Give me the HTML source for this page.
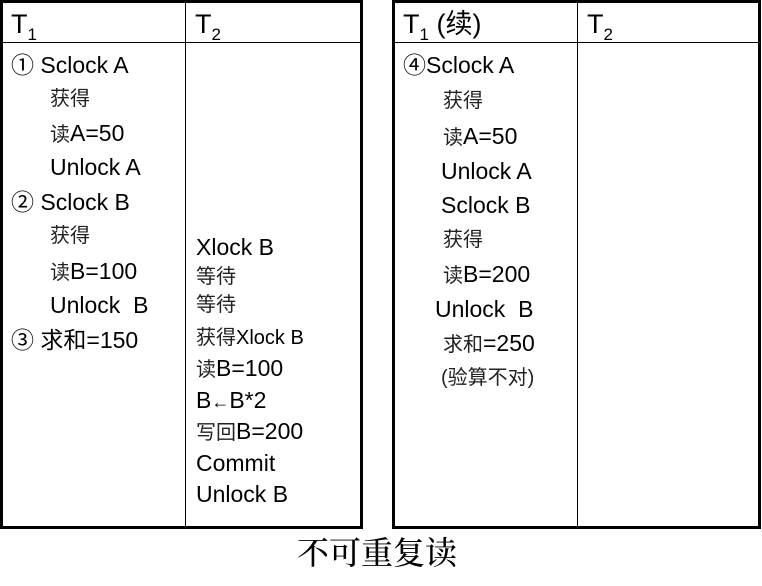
<!DOCTYPE html>
<html><head><meta charset="utf-8"><style>
body{margin:0;width:762px;height:586px;background:#fff;position:relative;overflow:hidden;font-family:"Liberation Sans","Noto Sans CJK SC",sans-serif;color:#000}
.b{position:absolute;border:3px solid #000;box-sizing:border-box}
.l{position:absolute;background:#000}
.t{position:absolute;font-size:23px;line-height:26px;white-space:pre}
.c{font-size:20px;color:#222}
sub{font-size:17px;vertical-align:-7px}
</style></head><body>
<div class="b" style="left:0;top:0;width:363px;height:529px"></div>
<div class="l" style="left:185px;top:0;width:1px;height:529px"></div>
<div class="l" style="left:0;top:42px;width:363px;height:1px"></div>
<div class="b" style="left:392px;top:0;width:369px;height:529px"></div>
<div class="l" style="left:577px;top:0;width:1px;height:529px"></div>
<div class="l" style="left:392px;top:42px;width:369px;height:1px"></div>

<div class="t" style="left:11px;top:9px;font-size:27px;line-height:30px">T<sub>1</sub></div>
<div class="t" style="left:195px;top:9px;font-size:27px;line-height:30px">T<sub>2</sub></div>
<div class="t" style="left:403px;top:9px;font-size:27px;line-height:30px">T<sub>1</sub> (续)</div>
<div class="t" style="left:587px;top:9px;font-size:27px;line-height:30px">T<sub>2</sub></div>

<div class="t" style="left:11px;top:52px">① Sclock A</div>
<div class="t c" style="left:50px;top:86px">获得</div>
<div class="t" style="left:50px;top:120px"><span class="c">读</span>A=50</div>
<div class="t" style="left:50px;top:154px">Unlock A</div>
<div class="t" style="left:11px;top:189px">② Sclock B</div>
<div class="t c" style="left:50px;top:223px">获得</div>
<div class="t" style="left:50px;top:258px"><span class="c">读</span>B=100</div>
<div class="t" style="left:50px;top:292px">Unlock  B</div>
<div class="t" style="left:11px;top:327px">③ 求和=150</div>

<div class="t" style="left:196px;top:234px">Xlock B</div>
<div class="t c" style="left:196px;top:264px">等待</div>
<div class="t c" style="left:196px;top:292px">等待</div>
<div class="t" style="left:196px;top:323px"><span class="c">获得</span><span style="font-size:20px">Xlock B</span></div>
<div class="t" style="left:196px;top:355px"><span class="c">读</span>B=100</div>
<div class="t" style="left:196px;top:387px">B<span style="font-size:18px">←</span>B*2</div>
<div class="t" style="left:196px;top:418px"><span class="c">写回</span>B=200</div>
<div class="t" style="left:196px;top:450px">Commit</div>
<div class="t" style="left:196px;top:481px">Unlock B</div>

<div class="t" style="left:403px;top:52px">④Sclock A</div>
<div class="t c" style="left:443px;top:88px">获得</div>
<div class="t" style="left:443px;top:123px"><span class="c">读</span>A=50</div>
<div class="t" style="left:441px;top:158px">Unlock A</div>
<div class="t" style="left:441px;top:192px">Sclock B</div>
<div class="t c" style="left:443px;top:227px">获得</div>
<div class="t" style="left:443px;top:261px"><span class="c">读</span>B=200</div>
<div class="t" style="left:435px;top:296px">Unlock  B</div>
<div class="t" style="left:443px;top:330px"><span class="c">求和</span>=250</div>
<div class="t c" style="left:441px;top:365px">(验算不对)</div>

<div class="t" style="left:297px;top:534px;font-size:32px;line-height:38px;font-family:'Liberation Serif','Noto Serif CJK SC',serif;font-weight:500">不可重复读</div>
</body></html>
